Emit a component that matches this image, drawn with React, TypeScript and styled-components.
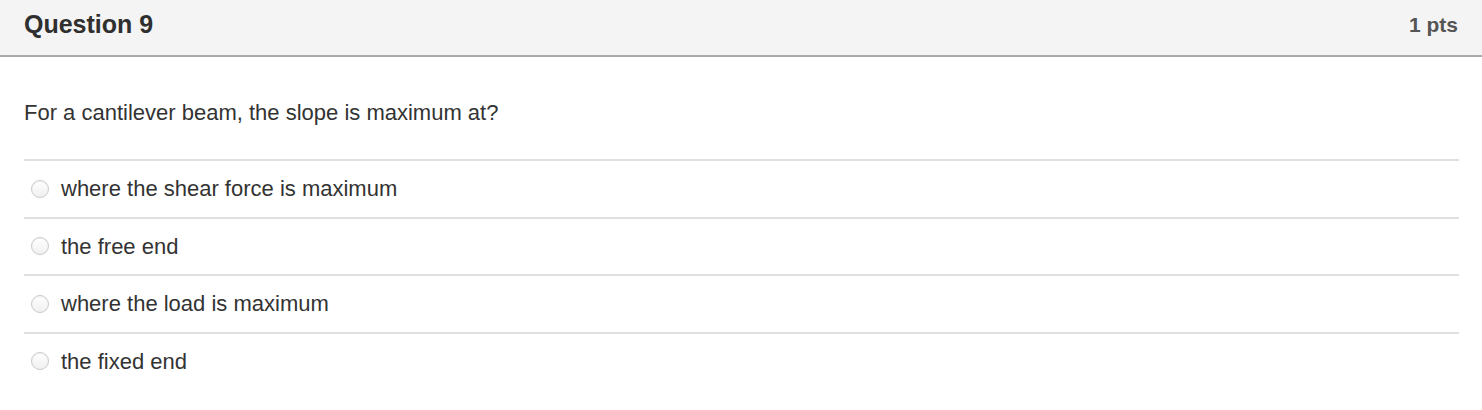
import React, { FC } from 'react';
import styled, { createGlobalStyle } from 'styled-components';

const GlobalStyle = createGlobalStyle`
  html, body {
    margin: 0;
    padding: 0;
    background: #ffffff;
  }
  body {
    font-family: 'Liberation Sans', Arial, Helvetica, sans-serif;
    color: #333333;
  }
`;

const QuestionCard = styled.div`
  display: flex;
  flex-direction: column;
  width: 1482px;
`;

const Header = styled.div`
  display: flex;
  justify-content: space-between;
  align-items: flex-start;
  padding: 10px 24px 16px;
  background: #f4f4f4;
  border-bottom: 2px solid #aaaaaa;
`;

const Title = styled.h2`
  margin: 0;
  font-size: 25px;
  line-height: 29px;
  font-weight: 700;
  color: #2f2f2f;
`;

const Points = styled.div`
  font-size: 21px;
  line-height: 29px;
  font-weight: 700;
  color: #555555;
`;

const Body = styled.div`
  display: flex;
  flex-direction: column;
  padding: 39px 23px 0 24px;
`;

const QuestionText = styled.p`
  margin: 0 0 30px;
  font-size: 22px;
  line-height: 33px;
`;

const AnswerList = styled.div`
  display: flex;
  flex-direction: column;
`;

const AnswerRow = styled.label`
  display: flex;
  align-items: center;
  gap: 12px;
  height: 55.5px;
  box-sizing: content-box;
  padding: 0 0 1px 7px;
  margin-top: -1px;
  border-top: 2px solid #e0e0e0;
  font-size: 22px;
  line-height: 33px;
  color: #333333;

  &:first-child {
    margin-top: 0;
  }
`;

const Radio = styled.span`
  display: inline-block;
  width: 18px;
  height: 18px;
  box-sizing: border-box;
  border-radius: 50%;
  border: 1px solid #cacaca;
  background: linear-gradient(#ffffff, #f0f0f0);
  box-shadow: inset 0 1px 1px rgba(0, 0, 0, 0.05);
  flex-shrink: 0;
`;

type Answer = { id: string; label: string };

const answers: Answer[] = [
  { id: 'a1', label: 'where the shear force is maximum' },
  { id: 'a2', label: 'the free end' },
  { id: 'a3', label: 'where the load is maximum' },
  { id: 'a4', label: 'the fixed end' },
];

const App: FC = () => (
  <>
    <GlobalStyle />
    <QuestionCard>
      <Header>
        <Title>Question 9</Title>
        <Points>1 pts</Points>
      </Header>
      <Body>
        <QuestionText>For a cantilever beam, the slope is maximum at?</QuestionText>
        <AnswerList>
          {answers.map((answer) => (
            <AnswerRow key={answer.id}>
              <Radio />
              {answer.label}
            </AnswerRow>
          ))}
        </AnswerList>
      </Body>
    </QuestionCard>
  </>
);

export default App;
